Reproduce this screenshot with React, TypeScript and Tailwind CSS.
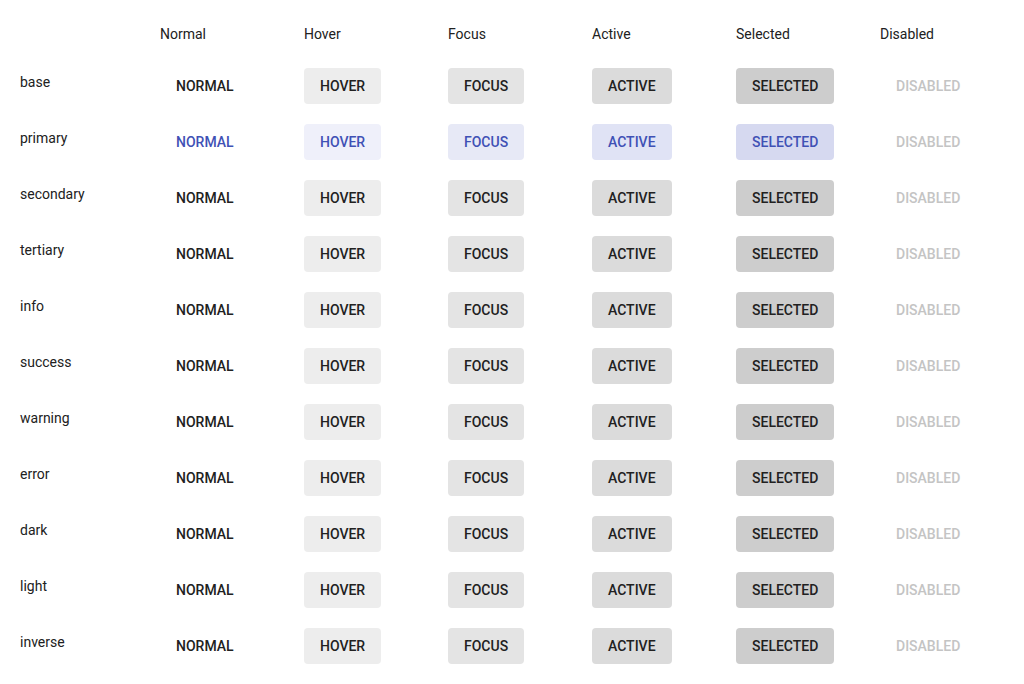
const states = ['Normal', 'Hover', 'Focus', 'Active', 'Selected', 'Disabled']
const variants = [
  'base',
  'primary',
  'secondary',
  'tertiary',
  'info',
  'success',
  'warning',
  'error',
  'dark',
  'light',
  'inverse',
]

const neutral: Record<string, string> = {
  Normal: 'bg-transparent text-[#212121]',
  Hover: 'bg-[#ededed] text-[#212121]',
  Focus: 'bg-[#e4e4e4] text-[#212121]',
  Active: 'bg-[#dbdbdb] text-[#212121]',
  Selected: 'bg-[#cdcdcd] text-[#212121]',
  Disabled: 'bg-transparent text-[#c4c4c4]',
}

const primary: Record<string, string> = {
  Normal: 'bg-transparent text-[#3f51b5]',
  Hover: 'bg-[#eff0fa] text-[#3f51b5]',
  Focus: 'bg-[#e7e9f6] text-[#3f51b5]',
  Active: 'bg-[#e0e3f5] text-[#3f51b5]',
  Selected: 'bg-[#d6d9f0] text-[#3f51b5]',
  Disabled: 'bg-transparent text-[#c4c4c4]',
}

function StateButton({ variant, state }: { variant: string; state: string }) {
  const tone = variant === 'primary' ? primary : neutral
  return (
    <button
      type="button"
      disabled={state === 'Disabled'}
      className={`h-9 rounded-[4px] px-4 text-sm font-medium uppercase leading-9 ${tone[state]}`}
    >
      {state}
    </button>
  )
}

export default function App() {
  return (
    <div
      className="min-h-[684px] bg-white text-[#212121]"
      style={{ fontFamily: 'Roboto, "Liberation Sans", sans-serif' }}
    >
      <div className="grid grid-cols-[160px_repeat(6,144px)]">
        <div className="h-[58px]" />
        {states.map((state) => (
          <div key={state} className="h-[58px] pt-6 text-sm leading-5">
            {state}
          </div>
        ))}

        {variants.map((variant) => (
          <div key={variant} className="contents">
            <div className="h-14 pl-5 pt-[14px] text-sm leading-5">{variant}</div>
            {states.map((state) => (
              <div key={state} className="flex h-14 items-start py-[10px]">
                <StateButton variant={variant} state={state} />
              </div>
            ))}
          </div>
        ))}
      </div>
    </div>
  )
}
